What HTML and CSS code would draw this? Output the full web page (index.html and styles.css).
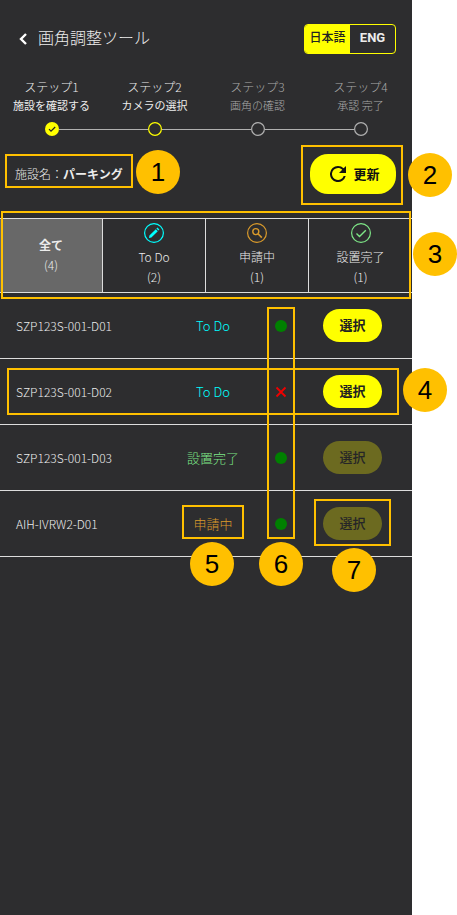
FILE: index.html
```html
<!DOCTYPE html>
<html lang="ja">
<head>
<meta charset="utf-8">
<meta name="viewport" content="width=device-width, initial-scale=1">
<title>画角調整ツール</title>
<link rel="stylesheet" href="styles.css">
</head>
<body>
<main class="app">
  <header class="header">
    <a class="back" href="#" aria-label="戻る">
      <svg width="8" height="12" viewBox="0 0 8 12" fill="none" stroke="currentColor" stroke-width="2.4"><path d="M7 1 2 6l5 5"/></svg>
    </a>
    <h1 class="title">画角調整ツール</h1>
    <div class="lang">
      <button class="lang-option lang-active" type="button">日本語</button>
      <button class="lang-option" type="button">ENG</button>
    </div>
  </header>

  <ol class="steps">
    <li class="step">
      <span class="step-name">ステップ1</span>
      <span class="step-text">施設を確認する</span>
      <span class="step-mark"><svg width="14" height="14" viewBox="0 0 14 14"><circle cx="7" cy="7" r="7" fill="#ff0"/><path d="m4 7.200 2 2L10.200 5" fill="none" stroke="#222" stroke-width="1.200"/></svg></span>
    </li>
    <li class="step">
      <span class="step-name">ステップ2</span>
      <span class="step-text">カメラの選択</span>
      <span class="step-mark step-mark-current"><svg width="14" height="14" viewBox="0 0 14 14"><circle cx="7" cy="7" r="6.400" fill="none" stroke="currentColor" stroke-width="1.200"/></svg></span>
    </li>
    <li class="step step-pending">
      <span class="step-name">ステップ3</span>
      <span class="step-text">画角の確認</span>
      <span class="step-mark"><svg width="14" height="14" viewBox="0 0 14 14"><circle cx="7" cy="7" r="6.400" fill="none" stroke="currentColor" stroke-width="1.200"/></svg></span>
    </li>
    <li class="step step-pending">
      <span class="step-name">ステップ4</span>
      <span class="step-text">承認 完了</span>
      <span class="step-mark"><svg width="14" height="14" viewBox="0 0 14 14"><circle cx="7" cy="7" r="6.400" fill="none" stroke="currentColor" stroke-width="1.200"/></svg></span>
    </li>
  </ol>

  <section class="facility">
    <p class="facility-name">施設名：<strong>パーキング</strong></p>
    <button class="refresh" type="button">
      <svg width="16" height="16" viewBox="4 4 16 16" fill="currentColor"><path d="M17.650 6.350A7.960 7.960 0 0 0 12 4a8 8 0 1 0 7.730 10h-2.080A6 6 0 1 1 12 6c1.660 0 3.140.69 4.220 1.780L13 11h7V4z"/></svg>
      更新
    </button>
    <span class="frame frame-1"></span><span class="badge badge-1">1</span>
    <span class="frame frame-2"></span><span class="badge badge-2">2</span>
  </section>

  <nav class="tabs">
    <button class="tab tab-active" type="button"><b>全て</b><span>(4)</span></button>
    <button class="tab" type="button">
      <svg class="todo" width="20" height="20" viewBox="0 0 20 20"><circle cx="10" cy="10" r="9.400" fill="none" stroke="currentColor" stroke-width="1.200"/><path d="m5 15 .4-2.400 6.400-6.400 2 2-6.400 6.400zM12.400 5.600l1-1 2 2-1 1z" fill="currentColor"/></svg>
      <span>To Do</span><span>(2)</span>
    </button>
    <button class="tab" type="button">
      <svg class="pending" width="20" height="20" viewBox="0 0 20 20" fill="none" stroke="currentColor"><circle cx="10" cy="10" r="9.400" stroke-width="1.200"/><circle cx="8.800" cy="8.600" r="3" stroke-width="1.400"/><path d="m11 10.800 3.800 3.800" stroke-width="1.600"/></svg>
      <span>申請中</span><span>(1)</span>
    </button>
    <button class="tab" type="button">
      <svg class="done" width="20" height="20" viewBox="0 0 20 20" fill="none" stroke="currentColor"><circle cx="10" cy="10" r="9.400" stroke-width="1.200"/><path d="m5.500 10.500 3 3 6.300-6.300" stroke-width="1.400"/></svg>
      <span>設置完了</span><span>(1)</span>
    </button>
    <span class="frame frame-3"></span><span class="badge badge-3">3</span>
  </nav>

  <section class="cameras">
    <table class="camera-table">
      <colgroup><col class="col-name"><col class="col-status"><col class="col-link"><col class="col-action"></colgroup>
      <tbody>
        <tr>
          <td class="camera-name">SZP123S-001-D01</td><td class="todo">To Do</td>
          <td><svg width="12" height="12" viewBox="0 0 12 12"><circle cx="6" cy="6" r="6" fill="#008000"/></svg></td>
          <td class="camera-action"><button class="select" type="button">選択</button></td>
        </tr>
        <tr>
          <td class="camera-name">SZP123S-001-D02</td><td class="todo">To Do</td>
          <td><svg width="12" height="12" viewBox="0 0 12 12"><path d="m1.500 1.500 9 9m0-9-9 9" stroke="#f00000" stroke-width="1.800"/></svg></td>
          <td class="camera-action"><button class="select" type="button">選択</button></td>
        </tr>
        <tr>
          <td class="camera-name">SZP123S-001-D03</td><td class="done">設置完了</td>
          <td><svg width="12" height="12" viewBox="0 0 12 12"><circle cx="6" cy="6" r="6" fill="#008000"/></svg></td>
          <td class="camera-action"><button class="select" type="button" disabled>選択</button></td>
        </tr>
        <tr>
          <td class="camera-name">AIH-IVRW2-D01</td><td class="pending">申請中</td>
          <td><svg width="12" height="12" viewBox="0 0 12 12"><circle cx="6" cy="6" r="6" fill="#008000"/></svg></td>
          <td class="camera-action"><button class="select" type="button" disabled>選択</button></td>
        </tr>
      </tbody>
    </table>
    <span class="frame frame-4"></span><span class="badge badge-4">4</span>
    <span class="frame frame-5"></span><span class="badge badge-5">5</span>
    <span class="frame frame-6"></span><span class="badge badge-6">6</span>
    <span class="frame frame-7"></span><span class="badge badge-7">7</span>
  </section>
</main>
</body>
</html>
```
FILE: styles.css
```css
* { box-sizing: border-box; }

body {
  margin: 0;
  padding-right: 45px;
  background: #fff;
  color: #ececec;
  font-family: "Noto Sans CJK JP", sans-serif;
  font-size: 12px;
  line-height: 20px;
}

button {
  border: 0;
  padding: 0 0 2px;
  background: none;
  color: inherit;
  font: inherit;
}

b, strong { font-weight: 700; }

svg { display: block; flex: none; }

.app {
  min-height: 100vh;
  background: #2d2d2f;
}

.header {
  display: flex;
  align-items: center;
  padding: 24px 16px 0 19px;
}

.back { color: #fff; }

.title {
  flex: 1;
  margin: 0 0 0 11px;
  padding-bottom: 4px;
  font-size: 16px;
  font-weight: 300;
}

.lang {
  display: flex;
  width: 92px;
  height: 30px;
  border: 1px solid #ff0;
  border-radius: 4px;
  overflow: hidden;
}

.lang-option {
  flex: 1;
  font-family: Roboto, "Noto Sans CJK JP", sans-serif;
  font-size: 13px;
  font-weight: 700;
}

.lang-active {
  background: #ff0;
  color: #222;
  font-size: 12px;
  font-weight: 500;
}

.steps {
  display: grid;
  grid-template-columns: repeat(4, 1fr);
  margin: 23px 0 0;
  padding: 0;
  list-style: none;
  text-align: center;
}

.step {
  display: flex;
  flex-direction: column;
}

.step-name {
  font-weight: 300;
}

.step-text {
  font-size: 11px;
  line-height: 16px;
}

.step-pending { color: #a8a8a8; font-weight: 300; }

.step-mark {
  display: flex;
  align-items: center;
  margin-top: 9px;
  color: #b0b0b0;
}

.step-mark-current svg { color: #ff0; }

.step-mark::before,
.step-mark::after {
  content: "";
  flex: 1;
  height: 1px;
  background: #b0b0b0;
}

.step:first-child .step-mark::before,
.step:last-child .step-mark::after { background: none; }

.facility {
  position: relative;
  display: flex;
  align-items: center;
  justify-content: space-between;
  padding: 18px 16px 24px 15px;
}

.facility-name { margin: 0; font-weight: 300; }

.refresh {
  display: flex;
  align-items: center;
  justify-content: center;
  gap: 7px;
  width: 86px;
  height: 40px;
  padding: 0 0 0 4px;
  border-radius: 18px;
  background: #ff0;
  color: #111;
  font-size: 13px;
  font-weight: 700;
}

.tabs {
  position: relative;
  display: grid;
  grid-template-columns: repeat(4, 1fr);
  border-top: 1px solid #ddd;
  border-bottom: 1px solid #ddd;
}

.tab {
  display: flex;
  flex-direction: column;
  align-items: center;
  justify-content: center;
  height: 73px;
  border-right: 1px solid #ddd;
  font-weight: 300;
}

.tab:nth-child(4) { border-right: 0; }

.tab svg { margin-bottom: 4px; }

.tab-active { background: #686868; }

.todo { color: #00ffff; }
.pending { color: #d99a2b; }
.done { color: #7ee787; }

.cameras { position: relative; }

.camera-table {
  width: 100%;
  table-layout: fixed;
  border-collapse: separate;
  border-spacing: 0;
  text-align: center;
}

.col-name { width: 162px; }
.col-status { width: 102px; }
.col-link { width: 34px; }

.camera-table td {
  height: 66px;
  padding: 0;
  border-bottom: 1px solid #ddd;
  font-size: 13px;
  font-weight: 300;
}

.camera-table .camera-name {
  padding-left: 16px;
  font-size: 12px;
  text-align: left;
}

.camera-table .camera-action { padding-right: 5px; }

.camera-table svg { margin: 0 auto; }

.select {
  width: 59px;
  height: 33px;
  border-radius: 17px;
  background: #ff0;
  color: #222;
  font-weight: 700;
}

.select:disabled {
  background: #6c6a20;
  color: #252527;
  font-weight: 500;
}

/* Numbered callouts over the screen */
.frame {
  position: absolute;
  z-index: 1;
  border: 2px solid #ffc000;
  pointer-events: none;
}

.badge {
  position: absolute;
  z-index: 1;
  width: 44px;
  height: 44px;
  border-radius: 50%;
  background: #ffc000;
  color: #000;
  font: 26px/44px "Liberation Sans", sans-serif;
  text-align: center;
}

.frame-1 { left: 5px; top: 18px; width: 128px; height: 34px; }
.badge-1 { left: 136px; top: 14px; }
.frame-2 { right: 9px; top: 9px; width: 102px; height: 60px; }
.badge-2 { right: -40px; top: 17px; }
.frame-3 { inset: -8px 1px -7px 1px; }
.badge-3 { right: -45px; top: 13px; }
.frame-4 { left: 7px; right: 13px; top: 75px; height: 47px; }
.badge-4 { right: -35px; top: 75px; }
.frame-5 { left: 182px; top: 212px; width: 62px; height: 34px; }
.badge-5 { left: 190px; top: 249px; }
.frame-6 { left: 267px; top: 14px; width: 28px; height: 232px; }
.badge-6 { left: 259px; top: 249px; }
.frame-7 { right: 21px; top: 206px; width: 77px; height: 47px; }
.badge-7 { right: 36px; top: 255px; }
```
